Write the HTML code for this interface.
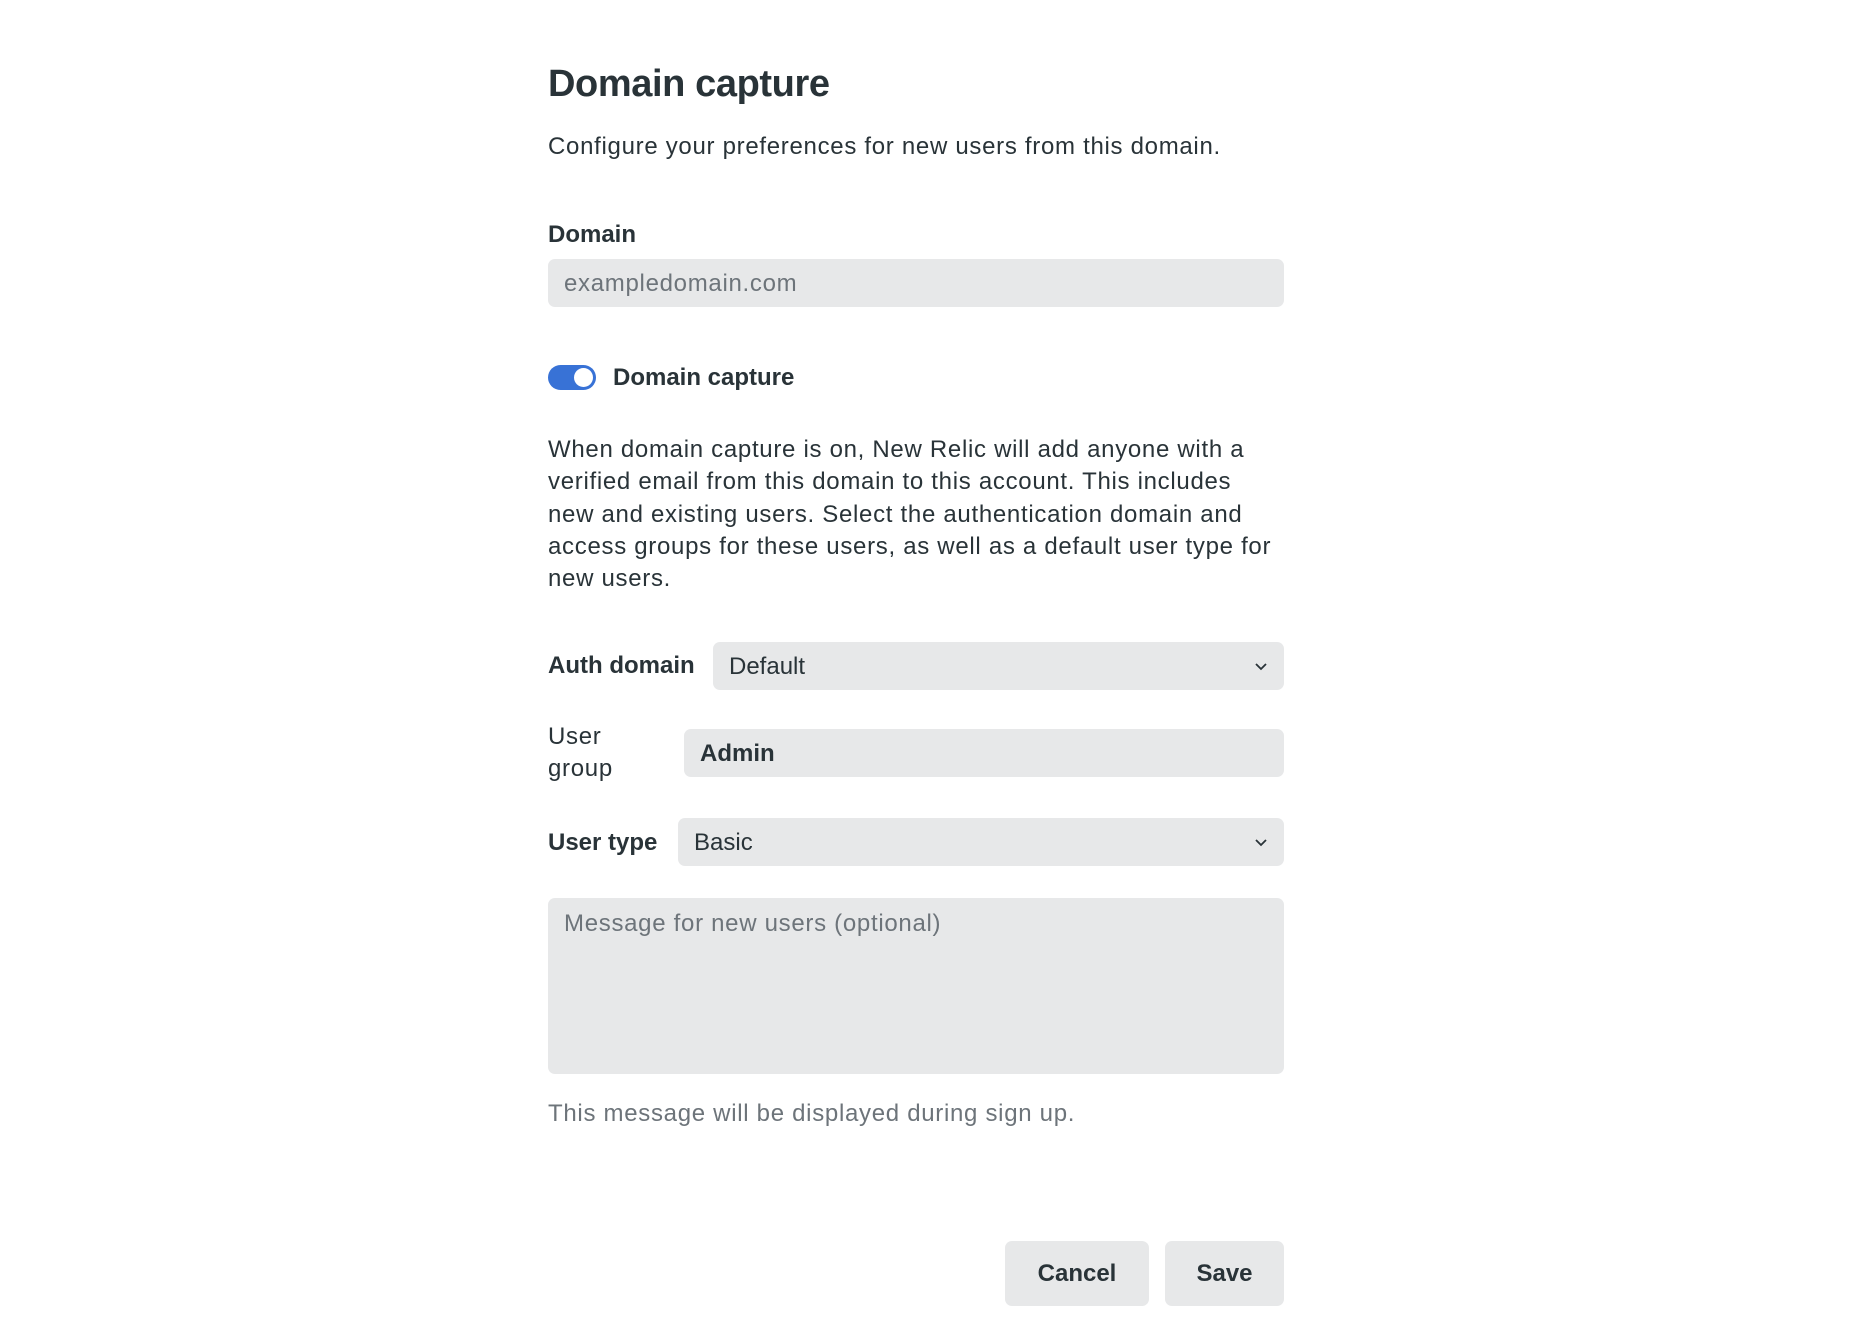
<!DOCTYPE html>
<html><head><meta charset="utf-8"><style>
*{box-sizing:border-box;margin:0;padding:0}
body{width:1870px;height:1326px;background:#fff;font-family:"Liberation Sans",sans-serif;color:#293338;position:relative;overflow:hidden}
.a{position:absolute;white-space:nowrap}
.box{position:absolute;background:#e7e8e9;border-radius:7px}
.lbl{font-weight:bold;font-size:24px}
.t{font-size:24px}
.r{letter-spacing:0.7px}
.chev{position:absolute;right:16px;top:17px}
</style></head><body>
<div class="a" style="left:548px;top:63px;font-size:38px;font-weight:bold;letter-spacing:-0.4px">Domain capture</div>
<div class="a t r" style="left:548px;top:133px">Configure your preferences for new users from this domain.</div>
<div class="a lbl" style="left:548px;top:221px">Domain</div>
<div class="box" style="left:548px;top:259px;width:736px;height:48px"><div class="a t r" style="left:16px;top:11px;color:#6d747a">exampledomain.com</div></div>
<div style="position:absolute;left:548px;top:365px;width:48px;height:25px;border-radius:13px;background:#3872d6"><div style="position:absolute;right:3px;top:3px;width:19px;height:19px;border-radius:50%;background:#fff"></div></div>
<div class="a lbl" style="left:613px;top:364px">Domain capture</div>
<div class="a t r" style="left:548px;top:434px;line-height:32.3px">When domain capture is on, New Relic will add anyone with a<br>verified email from this domain to this account. This includes<br>new and existing users. Select the authentication domain and<br>access groups for these users, as well as a default user type for<br>new users.</div>
<div class="a lbl" style="left:548px;top:652px">Auth domain</div>
<div class="box" style="left:713px;top:642px;width:571px;height:48px"><div class="a t" style="left:16px;top:11px">Default</div><svg class="chev" width="14" height="14" viewBox="0 0 14 14"><path d="M2 5l5 5 5-5" fill="none" stroke="#293338" stroke-width="1.8"/></svg></div>
<div class="a t r" style="left:548px;top:721px;line-height:32px">User<br>group</div>
<div class="box" style="left:684px;top:729px;width:600px;height:48px"><div class="a t" style="left:16px;top:11px;font-weight:bold">Admin</div></div>
<div class="a lbl" style="left:548px;top:829px">User type</div>
<div class="box" style="left:678px;top:818px;width:606px;height:48px"><div class="a t" style="left:16px;top:11px">Basic</div><svg class="chev" width="14" height="14" viewBox="0 0 14 14"><path d="M2 5l5 5 5-5" fill="none" stroke="#293338" stroke-width="1.8"/></svg></div>
<div class="box" style="left:548px;top:898px;width:736px;height:176px"><div class="a t r" style="left:16px;top:12px;color:#6d747a">Message for new users (optional)</div></div>
<div class="a t r" style="left:548px;top:1100px;color:#6d747a">This message will be displayed during sign up.</div>
<div class="box" style="left:1005px;top:1241px;width:144px;height:65px"><div class="a t" style="left:0;width:144px;text-align:center;top:19px;font-weight:bold">Cancel</div></div>
<div class="box" style="left:1165px;top:1241px;width:119px;height:65px"><div class="a t" style="left:0;width:119px;text-align:center;top:19px;font-weight:bold">Save</div></div>
</body></html>
